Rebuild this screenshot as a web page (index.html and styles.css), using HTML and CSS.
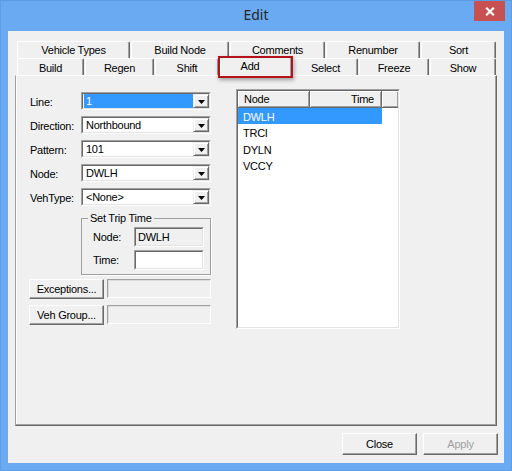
FILE: index.html
```html
<!DOCTYPE html>
<html>
<head>
<meta charset="utf-8">
<title>Edit</title>
<link rel="stylesheet" href="styles.css">
</head>
<body>
<div class="window">
  <div class="titlebar">
    <div class="title">Edit</div>
    <div class="close"><svg width="10" height="9" viewBox="0 0 10 9"><path d="M1.2 0.8 L8.8 8.2 M8.8 0.8 L1.2 8.2" stroke="#fff" stroke-width="2.2"/></svg></div>
  </div>
  <div class="client">
    <div class="tabctl">
      <div class="tabs">
        <div class="tabrow row1">
          <div class="tab w113">Vehicle Types</div>
          <div class="tab w98">Build Node</div>
          <div class="tab w95">Comments</div>
          <div class="tab w94">Renumber</div>
          <div class="tab w75">Sort</div>
        </div>
        <div class="tabrow row2">
          <div class="tab w67">Build</div>
          <div class="tab w69">Regen</div>
          <div class="tab w64">Shift</div>
          <div class="tab w72 selected">Add<span class="mark"></span></div>
          <div class="tab w65">Select</div>
          <div class="tab w70">Freeze</div>
          <div class="tab w66">Show</div>
        </div>
      </div>
      <div class="panel">
        <div class="leftcol">
          <div class="frow">
            <div class="label">Line:</div>
            <div class="combo"><div class="combo-in"><span class="ctext sel">1</span><span class="arrow"><svg width="7" height="4" viewBox="0 0 7 4"><path d="M0 0 H7 L3.5 4 Z" fill="#000"/></svg></span></div></div>
          </div>
          <div class="frow">
            <div class="label">Direction:</div>
            <div class="combo"><div class="combo-in"><span class="ctext">Northbound</span><span class="arrow"><svg width="7" height="4" viewBox="0 0 7 4"><path d="M0 0 H7 L3.5 4 Z" fill="#000"/></svg></span></div></div>
          </div>
          <div class="frow">
            <div class="label">Pattern:</div>
            <div class="combo"><div class="combo-in"><span class="ctext">101</span><span class="arrow"><svg width="7" height="4" viewBox="0 0 7 4"><path d="M0 0 H7 L3.5 4 Z" fill="#000"/></svg></span></div></div>
          </div>
          <div class="frow">
            <div class="label">Node:</div>
            <div class="combo"><div class="combo-in"><span class="ctext">DWLH</span><span class="arrow"><svg width="7" height="4" viewBox="0 0 7 4"><path d="M0 0 H7 L3.5 4 Z" fill="#000"/></svg></span></div></div>
          </div>
          <div class="frow">
            <div class="label">VehType:</div>
            <div class="combo"><div class="combo-in"><span class="ctext">&lt;None&gt;</span><span class="arrow"><svg width="7" height="4" viewBox="0 0 7 4"><path d="M0 0 H7 L3.5 4 Z" fill="#000"/></svg></span></div></div>
          </div>
          <fieldset class="group">
            <legend>Set Trip Time</legend>
            <div class="grow">
              <div class="glabel">Node:</div>
              <div class="edit ro"><div class="edit-in">DWLH</div></div>
            </div>
            <div class="grow second">
              <div class="glabel">Time:</div>
              <div class="edit"><div class="edit-in"></div></div>
            </div>
          </fieldset>
          <div class="brow">
            <div class="btn small">Exceptions...</div>
            <div class="dfield"></div>
          </div>
          <div class="brow second">
            <div class="btn small">Veh Group...</div>
            <div class="dfield"></div>
          </div>
        </div>
        <div class="list">
          <div class="list-in">
            <div class="lhead">
              <div class="hcell c1">Node</div>
              <div class="hcell c2">Time</div>
              <div class="hcell c3"></div>
            </div>
            <div class="lrow selrow">DWLH</div>
            <div class="lrow">TRCI</div>
            <div class="lrow">DYLN</div>
            <div class="lrow">VCCY</div>
          </div>
        </div>
      </div>
    </div>
    <div class="footer">
      <div class="btn big">Close</div>
      <div class="btn big disabled">Apply</div>
    </div>
  </div>
</div>
</body>
</html>
```
FILE: styles.css
```css
* { box-sizing: border-box; }
html, body { margin: 0; padding: 0; }
body {
  width: 512px;
  height: 471px;
  overflow: hidden;
  font-family: "Liberation Sans", Arial, sans-serif;
  font-size: 11px;
  letter-spacing: -0.25px;
  color: #000;
}
.window {
  width: 512px;
  height: 471px;
  background: #6aaaf2;
  border: 1px solid #5d9ee6;
  border-top-color: #5a9be3;
  display: flex;
  flex-direction: column;
}
.titlebar {
  height: 30px;
  display: grid;
  grid-template-columns: 1fr auto 1fr;
  align-items: start;
}
.title {
  grid-column: 2;
  font-family: "Noto Sans", "Open Sans", sans-serif;
  font-size: 14px;
  letter-spacing: 0;
  line-height: 20px;
  padding-top: 4px;
  color: #262626;
}
.close {
  grid-column: 3;
  justify-self: end;
  width: 31px;
  height: 20px;
  margin-right: 6px;
  background: #c75050;
  display: flex;
  align-items: center;
  justify-content: center;
}
.client {
  margin: 0 7px 0 7px;
  width: 496px;
  height: 432px;
  background: #f0f0f0;
  padding: 10px 0 0 7px;
}
.tabctl { width: 482px; }
.tabs { padding-left: 2px; }
.tabrow {
  display: flex;
  gap: 1px;
  height: 17px;
}
.tab {
  height: 17px;
  background: #f0f0f0;
  border-top: 1px solid #fff;
  border-left: 1px solid #fff;
  border-right: 1px solid #696969;
  box-shadow: inset -1px 0 0 #a0a0a0;
  border-radius: 2px 2px 0 0;
  text-align: center;
  line-height: 16px;
  white-space: nowrap;
}
.row2 .tab { line-height: 18px; }
.tab.selected {
  position: relative;
  z-index: 2;
  margin-top: -2px;
  height: 20px;
  line-height: 18px;
  padding-right: 12px;
}
.mark {
  position: absolute;
  left: -3px;
  top: -1px;
  width: 75px;
  height: 22px;
  border: 2px solid #b3141c;
  box-shadow: 1px 2px 4px rgba(0,0,0,0.35);
}
.w113 { width: 113px; }
.w98 { width: 98px; }
.w95 { width: 95px; }
.w94 { width: 94px; }
.w75 { width: 75px; }
.w67 { width: 67px; }
.w69 { width: 69px; }
.w64 { width: 64px; }
.w72 { width: 72px; }
.w65 { width: 65px; }
.w70 { width: 70px; }
.w66 { width: 66px; }
.panel {
  height: 351px;
  border-top: 1px solid #fff;
  border-left: 1px solid #a0a0a0;
  border-right: 1px solid #696969;
  border-bottom: 1px solid #696969;
  box-shadow: inset -1px -1px 0 #a0a0a0, inset 1px 0 0 #fff;
  padding: 13px 0 0 13px;
  display: flex;
  align-items: flex-start;
}
.leftcol {
  width: 182px;
  margin-top: 3px;
  margin-right: 25px;
}
.frow {
  display: flex;
  height: 18px;
  margin-bottom: 6px;
}
.label {
  width: 52px;
  padding-left: 1px;
  padding-top: 1px;
  line-height: 18px;
  white-space: nowrap;
}
.combo {
  width: 130px;
  height: 18px;
  border: 1px solid;
  border-color: #a0a0a0 #fff #fff #a0a0a0;
}
.combo-in {
  height: 100%;
  border: 1px solid;
  border-color: #696969 #e3e3e3 #e3e3e3 #696969;
  background: #fff;
  display: flex;
}
.ctext {
  flex: 1;
  margin-left: 1px;
  padding-left: 2px;
  line-height: 14px;
  white-space: nowrap;
}
.ctext.sel { background: #3399ff; color: #fff; }
.arrow {
  width: 16px;
  height: 14px;
  background: #f0f0f0;
  border: 1px solid;
  border-color: #f0f0f0 #696969 #696969 #f0f0f0;
  box-shadow: inset 1px 1px 0 #fff, inset -1px -1px 0 #a0a0a0;
  display: flex;
  align-items: center;
  justify-content: center;
  padding-top: 1px;
}
.group {
  margin: 2px 0 0 52px;
  width: 130px;
  padding: 3px 0 4px 0;
  border: 1px solid #a0a0a0;
  box-shadow: 1px 1px 0 #fff;
  min-width: 0;
}
.group legend {
  padding: 0 2px;
  margin-left: 6px;
  line-height: 12px;
  white-space: nowrap;
}
.grow {
  display: flex;
  height: 20px;
  padding-left: 11px;
}
.grow.second { margin-top: 3px; }
.glabel {
  width: 41px;
  line-height: 20px;
}
.edit {
  width: 70px;
  height: 20px;
  border: 1px solid;
  border-color: #a0a0a0 #fff #fff #a0a0a0;
}
.edit-in {
  height: 100%;
  border: 1px solid;
  border-color: #696969 #e3e3e3 #e3e3e3 #696969;
  background: #fff;
  padding-left: 2px;
  line-height: 16px;
}
.edit.ro .edit-in { background: #f0f0f0; }
.brow {
  display: flex;
  gap: 3px;
  margin-top: 4px;
}
.brow.second { margin-top: 6px; }
.btn {
  background: #f0f0f0;
  border: 1px solid;
  border-color: #fff #696969 #696969 #fff;
  box-shadow: inset -1px -1px 0 #a0a0a0;
  text-align: center;
  white-space: nowrap;
}
.btn.small {
  width: 75px;
  height: 20px;
  line-height: 18px;
}
.dfield {
  width: 104px;
  height: 19px;
  border: 1px solid;
  border-color: #a0a0a0 #fff #fff #a0a0a0;
  box-shadow: inset 1px 1px 0 #dcdcdc;
}
.list {
  width: 164px;
  height: 240px;
  border: 1px solid;
  border-color: #a0a0a0 #fff #fff #a0a0a0;
}
.list-in {
  height: 100%;
  border: 1px solid;
  border-color: #696969 #e3e3e3 #e3e3e3 #696969;
  background: #fff;
}
.lhead {
  display: flex;
  height: 17px;
}
.hcell {
  height: 17px;
  background: #f0f0f0;
  border-right: 1px solid #696969;
  border-bottom: 1px solid #696969;
  box-shadow: inset 1px 1px 0 #fff, inset -1px -1px 0 #a0a0a0;
  line-height: 16px;
  white-space: nowrap;
}
.c1 { width: 72px; padding-left: 6px; }
.c2 { width: 72px; text-align: right; padding-right: 7px; }
.c3 { flex: 1; border-right: none; }
.lrow {
  width: 144px;
  height: 16.33px;
  padding-left: 5px;
  padding-top: 1px;
  line-height: 16px;
}
.selrow { background: #3399ff; color: #fff; }
.footer {
  display: flex;
  justify-content: flex-end;
  gap: 6px;
  margin-top: 7px;
  padding-right: 6px;
}
.btn.big {
  width: 75px;
  height: 22px;
  line-height: 20px;
}
.btn.disabled { color: #a0a0a0; }
```
